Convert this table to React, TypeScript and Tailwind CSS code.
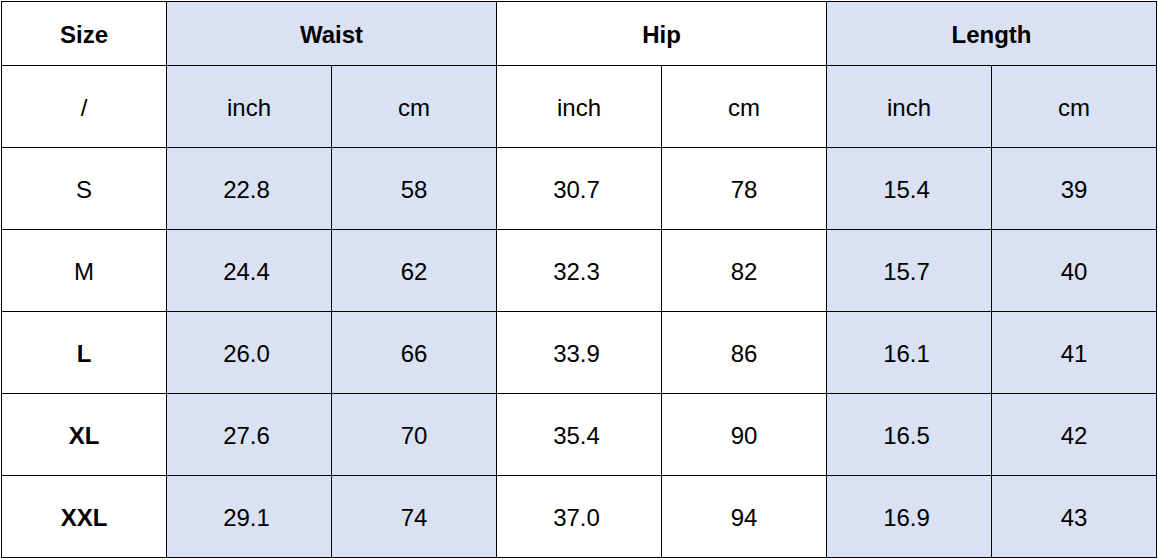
import React from 'react';

const rows: { size: string; bold: boolean; values: string[] }[] = [
  { size: 'S', bold: false, values: ['22.8', '58', '30.7', '78', '15.4', '39'] },
  { size: 'M', bold: false, values: ['24.4', '62', '32.3', '82', '15.7', '40'] },
  { size: 'L', bold: true, values: ['26.0', '66', '33.9', '86', '16.1', '41'] },
  { size: 'XL', bold: true, values: ['27.6', '70', '35.4', '90', '16.5', '42'] },
  { size: 'XXL', bold: true, values: ['29.1', '74', '37.0', '94', '16.9', '43'] },
];

const units = ['inch', 'cm', 'inch', 'cm', 'inch', 'cm'];

// columns 1-2 and 5-6 are shaded
const shade = (col: number) => (col === 0 || col === 1 || col === 4 || col === 5 ? 'bg-[#d9e1f2]' : 'bg-white');

export default function App() {
  return (
    <div className="w-[1158px] h-[560px] bg-white pl-px pt-px" style={{ fontFamily: '"Liberation Sans", Arial, sans-serif' }}>
      <div className="grid w-[1156px] grid-cols-[repeat(7,164px)] grid-rows-[63px_repeat(6,81px)] gap-px bg-black p-px text-[24px] text-black">
        <div className="flex items-center justify-center bg-white pt-[2px] font-bold">Size</div>
        <div className="col-span-2 flex items-center justify-center bg-[#d9e1f2] pt-[2px] font-bold">Waist</div>
        <div className="col-span-2 flex items-center justify-center bg-white pt-[2px] font-bold">Hip</div>
        <div className="col-span-2 flex items-center justify-center bg-[#d9e1f2] pt-[2px] font-bold">Length</div>

        <div className="flex items-center justify-center bg-white pt-[2px]">/</div>
        {units.map((u, i) => (
          <div key={i} className={`flex items-center justify-center pt-[2px] ${shade(i)}`}>
            {u}
          </div>
        ))}

        {rows.map((r) => (
          <React.Fragment key={r.size}>
            <div className={`flex items-center justify-center bg-white pt-[2px] ${r.bold ? 'font-bold' : ''}`}>{r.size}</div>
            {r.values.map((v, i) => (
              <div
                key={i}
                className={`flex items-center justify-center pt-[2px] ${v.includes('.') ? 'pr-[5px]' : ''} ${shade(i)}`}
              >
                {v}
              </div>
            ))}
          </React.Fragment>
        ))}
      </div>
    </div>
  );
}
